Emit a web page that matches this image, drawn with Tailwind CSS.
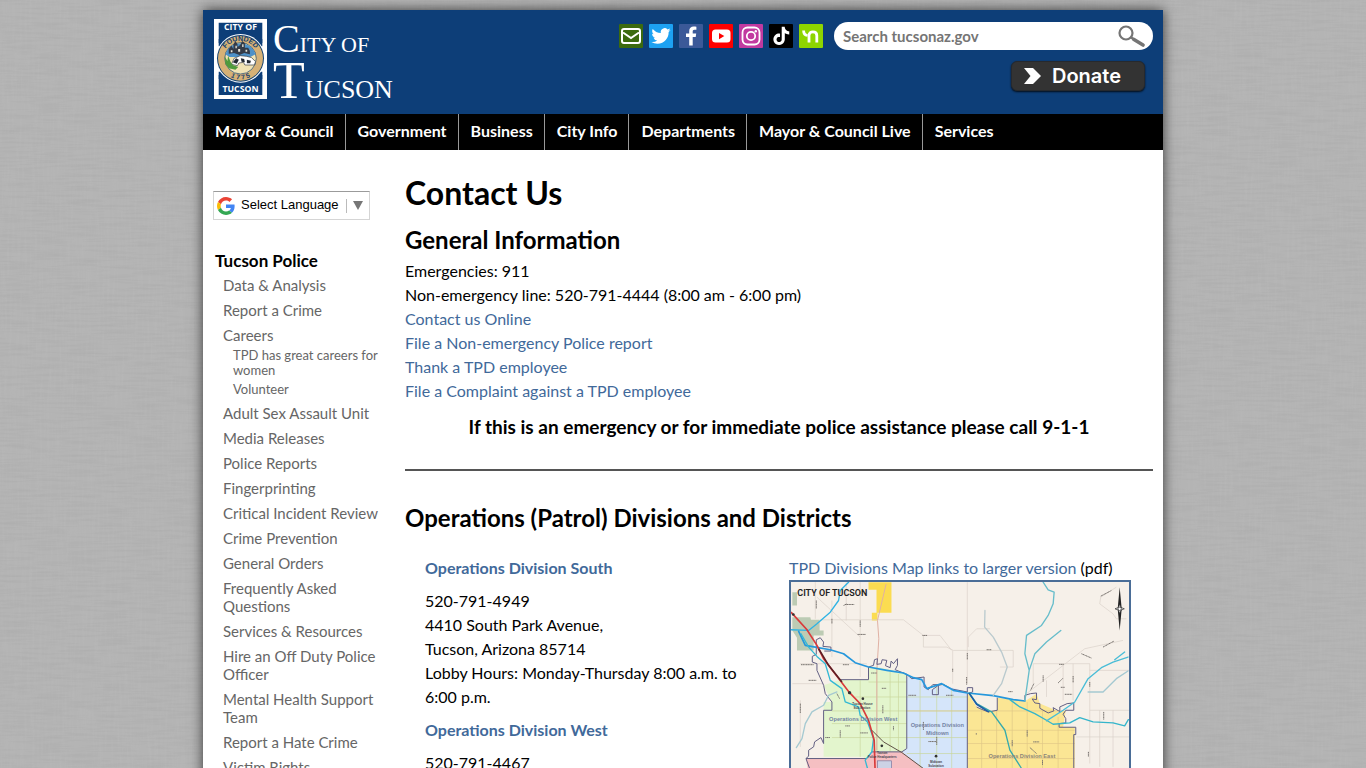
<!DOCTYPE html>
<html lang="en">
<head>
  <meta charset="UTF-8" />
  <meta name="viewport" content="width=device-width, initial-scale=1" />
  <title>Contact Us | City of Tucson</title>
  <script src="https://cdn.jsdelivr.net/npm/@tailwindcss/browser@4"></script>
</head>
<body class="relative min-h-screen bg-[#b4b4b4] pt-[10px] font-[Lato,sans-serif] text-base leading-6 text-black">
  <!-- linen background -->
  <svg class="absolute inset-0 h-full w-full" aria-hidden="true">
    <filter id="weft" x="0" y="0" width="100%" height="100%">
      <feTurbulence type="fractalNoise" baseFrequency="0.03 0.4" numOctaves="2" seed="4" />
      <feColorMatrix values="0 0 0 0 0  0 0 0 0 0  0 0 0 0 0  0.5 0 0 0 -0.2" />
    </filter>
    <filter id="warp" x="0" y="0" width="100%" height="100%">
      <feTurbulence type="fractalNoise" baseFrequency="0.4 0.03" numOctaves="2" seed="9" />
      <feColorMatrix values="0 0 0 0 1  0 0 0 0 1  0 0 0 0 1  0.5 0 0 0 -0.2" />
    </filter>
    <rect width="100%" height="100%" filter="url(#weft)" opacity="0.12" />
    <rect width="100%" height="100%" filter="url(#warp)" opacity="0.14" />
  </svg>

  <div class="relative mx-auto max-w-[960px] bg-white shadow-[0_0_12px_rgba(0,0,0,0.7)]">
    <header class="flex h-[104px] justify-between bg-[#0d3e78] pt-[9px] pr-[10px] pl-[11px]">
      <a href="#" class="flex items-start gap-[6px] text-white">
        <svg class="h-[80px] w-[53px]" viewBox="0 0 158 240" preserveAspectRatio="none" role="img" aria-label="City of Tucson seal">
          <rect width="158" height="240" fill="#fff" />
          <path d="M14 11H144V72L14 72ZM14 168H144V228H14Z" fill="#0d3e78" />
          <path d="M14 60H144V82H14ZM14 158H144V180H14Z" fill="#0d3e78" />
          <text x="79" y="34" text-anchor="middle" font-family="Open Sans" font-weight="bold" font-size="26" fill="#fff">CITY OF</text>
          <circle cx="79" cy="118" r="73" fill="#fff" />
          <circle cx="79" cy="118" r="70" fill="#12406f" />
          <circle cx="79" cy="118" r="67" fill="#d6b176" />
          <circle cx="79" cy="118" r="47" fill="#f1e3b4" stroke="#12406f" stroke-width="2" />
          <path d="M34 106A47 47 0 0 1 124 106L108 114H46Z" fill="#4e91c8" />
          <path id="ringTop" d="M26 118A53 53 0 0 1 132 118" fill="none" />
          <path id="ringBottom" d="M16 118A63 63 0 0 0 142 118" fill="none" />
          <text font-family="Liberation Sans" font-weight="bold" font-size="21" fill="#12406f" text-anchor="middle"><textPath href="#ringTop" startOffset="50%">FOUNDED</textPath></text>
          <text font-family="Liberation Sans" font-weight="bold" font-size="20" fill="#12406f" text-anchor="middle"><textPath href="#ringBottom" startOffset="50%">1 7 7 5</textPath></text>
          <path d="M44 104V90L52 80L58 90V76L64 66L70 76V84L78 78L84 66L92 72V86H102L107 96V106L90 102L76 108L60 102Z" fill="#343b48" />
          <path d="M50 94h5v6h-5zM64 80h4v8h-4zM84 76h4v8h-4zM72 90h6v8h-6zM94 92h5v6h-5z" fill="#e9e5d8" />
          <path d="M52 136L60 118L78 110L98 112L112 116L124 128L120 138H92L88 130L74 132L70 140Z" fill="#fff" stroke="#30343b" stroke-width="2" />
          <path d="M56 130l10-12 8 4-6 12zM80 118l10 2 2 10-10-2zM98 122l12 3-2 8h-10z" fill="#222831" />
          <path d="M32 112l8 14 2-16 8 20 6 8 16 6-8 8-20-4-10-14z" fill="#4f9a3c" />
          <text x="79" y="219" text-anchor="middle" font-family="Open Sans" font-weight="bold" font-size="26" fill="#fff">TUCSON</text>
        </svg>
        <span class="flex flex-col font-['Liberation_Serif',serif]">
          <span class="text-[22px] leading-10"><span class="text-[40px]">C</span>ITY OF</span>
          <span class="text-[26px] leading-8"><span class="text-[52px]">T</span>UCSON</span>
        </span>
      </a>

      <div class="flex flex-col items-end gap-[11px] pt-[3px]">
        <div class="flex items-center gap-[11px]">
          <nav class="flex gap-[6px]" aria-label="Social media">
            <a href="#" aria-label="Email">
              <svg class="size-6" viewBox="0 0 24 24"><rect width="24" height="24" rx="1" fill="#3c6a0f" /><rect x="3" y="5" width="18" height="14" rx="2" fill="none" stroke="#fff" stroke-width="2" /><path d="M4 8.500L12 14L20 8.500" fill="none" stroke="#fff" stroke-width="2" /></svg>
            </a>
            <a href="#" aria-label="Twitter">
              <svg class="size-6" viewBox="0 0 24 24"><rect width="24" height="24" rx="1" fill="#1da1f2" /><path transform="translate(2.400 2.400) scale(.8)" fill="#fff" d="M23.950 4.570a10 10 0 0 1-2.820.770 4.960 4.960 0 0 0 2.160-2.720c-.950.550-2 .950-3.130 1.180a4.920 4.920 0 0 0-8.380 4.480C7.690 8.090 4.070 6.130 1.640 3.160a4.820 4.820 0 0 0-.670 2.480c0 1.710.870 3.210 2.190 4.100a4.900 4.900 0 0 1-2.230-.620v.060a4.920 4.920 0 0 0 3.950 4.830 5 5 0 0 1-2.210.080 4.940 4.940 0 0 0 4.600 3.420A9.870 9.870 0 0 1 0 19.540a13.990 13.990 0 0 0 7.550 2.210c9.050 0 14-7.500 14-13.980 0-.210 0-.420-.020-.630a9.940 9.940 0 0 0 2.460-2.550z" /></svg>
            </a>
            <a href="#" aria-label="Facebook">
              <svg class="size-6" viewBox="0 0 24 24"><rect width="24" height="24" rx="1" fill="#3b5998" /><path d="M10.200 21.500V13H7V9.600h3.200V7c0-3 1.800-4.500 4.500-4.500 1.300 0 2.300.1 2.700.2v3.100h-1.900c-1.400 0-1.800.7-1.800 1.800v2h3.500L16.700 13h-3v8.500Z" fill="#fff" /></svg>
            </a>
            <a href="#" aria-label="YouTube">
              <svg class="size-6" viewBox="0 0 24 24"><rect width="24" height="24" rx="1" fill="#f00" /><rect x="3" y="5.500" width="18.500" height="13" rx="3.500" fill="#fff" /><path d="M10 9V15.200L15.300 12Z" fill="#f00" /></svg>
            </a>
            <a href="#" aria-label="Instagram">
              <svg class="size-6" viewBox="0 0 24 24"><rect width="24" height="24" rx="1" fill="#c13aa0" /><rect x="3.500" y="3.500" width="17" height="17" rx="5" fill="none" stroke="#fff" stroke-width="1.800" /><circle cx="12" cy="12" r="4.200" fill="none" stroke="#fff" stroke-width="1.800" /><circle cx="16.800" cy="7.300" r="1.200" fill="#fff" /></svg>
            </a>
            <a href="#" aria-label="TikTok">
              <svg class="size-6" viewBox="0 0 24 24"><rect width="24" height="24" rx="1" fill="#000" /><path transform="translate(3.200 2.800) scale(.76)" fill="#fff" d="M12.530.020c1.310-.020 2.610-.010 3.910-.020.080 1.530.630 3.090 1.750 4.170 1.120 1.110 2.700 1.620 4.240 1.790v4.030c-1.440-.050-2.890-.350-4.200-.970-.570-.260-1.100-.590-1.620-.930-.010 2.920.010 5.840-.020 8.750-.080 1.400-.540 2.790-1.350 3.940-1.310 1.920-3.580 3.170-5.910 3.210-1.430.080-2.860-.310-4.080-1.030-2.020-1.190-3.440-3.370-3.650-5.710-.020-.5-.030-1-.010-1.490.180-1.900 1.120-3.720 2.580-4.960 1.660-1.440 3.980-2.130 6.150-1.720.020 1.480-.040 2.960-.040 4.440-.990-.320-2.150-.230-3.020.370-.630.410-1.110 1.040-1.360 1.750-.210.510-.150 1.070-.140 1.610.240 1.640 1.820 3.020 3.500 2.870 1.120-.010 2.190-.660 2.770-1.610.190-.330.400-.670.410-1.060.1-1.790.060-3.570.070-5.360.010-4.030-.010-8.050.020-12.070z" /></svg>
            </a>
            <a href="#" aria-label="Nextdoor">
              <svg class="size-6" viewBox="0 0 24 24"><rect width="24" height="24" rx="1" fill="#8ed500" /><path d="M4.600 6.500c0 3.200 1.200 4.600 3.800 4.900M10 18.500V11.500c0-2.400 1.600-3.700 3.900-3.700s3.900 1.300 3.900 3.700v7" fill="none" stroke="#fff" stroke-width="2.800" /></svg>
            </a>
          </nav>
          <form class="flex h-7 w-[319px] items-center rounded-full bg-white pr-2 pl-[9px]">
            <input type="search" aria-label="Search" placeholder="Search tucsonaz.gov" class="min-w-0 flex-1 text-[15px] font-bold text-[#757575] outline-none placeholder:text-[#757575]" />
            <button type="button" aria-label="Search">
              <svg class="h-[22px] w-[27px]" viewBox="0 0 27 22"><circle cx="8" cy="8" r="6.500" fill="none" stroke="#757575" stroke-width="2.200" /><path d="M12.500 12L16 14.500" stroke="#757575" stroke-width="2.500" /><path d="M16 14.500L25 20" stroke="#757575" stroke-width="3.600" stroke-linecap="round" /></svg>
            </button>
          </form>
        </div>
        <button type="button" class="mr-2 flex h-[30px] w-[134px] items-center gap-[11px] rounded-md border border-[#26292e] bg-[#333] pl-3 font-[Inter,sans-serif] text-xl font-semibold text-white shadow-[0_1px_2px_rgba(0,0,0,0.8)]">
          <svg class="h-4 w-[17px]" viewBox="0 0 17 16"><path d="M0 0H9L17 8L9 16H0L6.500 8Z" fill="#fff" /></svg>
          Donate
        </button>
      </div>
    </header>

    <nav class="flex h-9 bg-black font-bold leading-[34px] text-white">
      <a href="#" class="border-r border-[#999] pr-[11px] pl-3">Mayor &amp; Council</a>
      <a href="#" class="border-r border-[#999] pr-[11px] pl-3">Government</a>
      <a href="#" class="border-r border-[#999] pr-[11px] pl-3">Business</a>
      <a href="#" class="border-r border-[#999] pr-[11px] pl-3">City Info</a>
      <a href="#" class="border-r border-[#999] pr-[11px] pl-3">Departments</a>
      <a href="#" class="border-r border-[#999] pr-[11px] pl-3">Mayor &amp; Council Live</a>
      <a href="#" class="pr-[11px] pl-3">Services</a>
    </nav>

    <div class="flex px-[10px]">
      <aside class="w-48 shrink-0 pt-[41px]">
        <label class="flex h-[29px] w-[157px] items-center border border-[#d5d5d5] border-t-[#9b9b9b] pl-[3px]">
          <svg class="mr-[2px] size-[18px]" viewBox="0 0 48 48" aria-hidden="true">
            <path fill="#ea4335" d="M24 9.500c3.540 0 6.710 1.220 9.210 3.600l6.850-6.850C35.900 2.380 30.470 0 24 0 14.620 0 6.510 5.380 2.560 13.220l7.980 6.190C12.430 13.720 17.740 9.500 24 9.500z" />
            <path fill="#4285f4" d="M46.980 24.550c0-1.570-.150-3.090-.380-4.550H24v9.020h12.940c-.580 2.960-2.260 5.480-4.780 7.180l7.730 6c4.510-4.180 7.090-10.360 7.090-17.650z" />
            <path fill="#fbbc05" d="M10.530 28.590c-.480-1.450-.760-2.990-.760-4.590s.270-3.140.760-4.590l-7.980-6.190C.920 16.460 0 20.120 0 24c0 3.880.920 7.540 2.560 10.780l7.970-6.190z" />
            <path fill="#34a853" d="M24 48c6.480 0 11.930-2.130 15.890-5.810l-7.730-6c-2.150 1.450-4.920 2.300-8.160 2.300-6.260 0-11.570-4.220-13.470-9.910l-7.980 6.190C6.510 42.620 14.620 48 24 48z" />
          </svg>
          <select aria-label="Select Language" class="w-[109px] appearance-none px-1 pb-[2px] font-['Liberation_Sans',sans-serif] text-[13px] leading-5">
            <option>Select Language</option>
          </select>
          <span class="h-[14px] border-l border-[#bbb]"></span>
          <svg class="ml-[6px] h-[9px] w-[10px]" viewBox="0 0 10 9"><path d="M0 0H10L5 9Z" fill="#767676" /></svg>
        </label>

        <h2 class="mt-[29px] ml-[2px] text-[17px] leading-6 font-bold">Tucson Police</h2>
        <ul class="mt-[3px] ml-[10px] flex w-[168px] flex-col gap-[7px] text-[15px] leading-[18px] text-[#666]">
          <li><a href="#">Data &amp; Analysis</a></li>
          <li><a href="#">Report a Crime</a></li>
          <li>
            <a href="#">Careers</a>
            <ul class="mt-1 ml-[10px] flex flex-col gap-1 text-[13px] leading-[15px]">
              <li><a href="#">TPD has great careers for women</a></li>
              <li><a href="#">Volunteer</a></li>
            </ul>
          </li>
          <li><a href="#">Adult Sex Assault Unit</a></li>
          <li><a href="#">Media Releases</a></li>
          <li><a href="#">Police Reports</a></li>
          <li><a href="#">Fingerprinting</a></li>
          <li><a href="#">Critical Incident Review</a></li>
          <li><a href="#">Crime Prevention</a></li>
          <li><a href="#">General Orders</a></li>
          <li><a href="#">Frequently Asked Questions</a></li>
          <li><a href="#">Services &amp; Resources</a></li>
          <li><a href="#">Hire an Off Duty Police Officer</a></li>
          <li><a href="#">Mental Health Support Team</a></li>
          <li><a href="#">Report a Hate Crime</a></li>
          <li><a href="#">Victim Rights</a></li>
        </ul>
      </aside>

      <main class="min-w-0 flex-1 pt-[23px]">
        <h1 class="text-[32px] leading-10 font-bold">Contact Us</h1>
        <h2 class="mt-[15px] text-2xl leading-6 font-bold">General Information</h2>
        <p class="mt-[7px]">
          Emergencies: 911<br />
          Non-emergency line: 520-791-4444 (8:00 am - 6:00 pm)<br />
          <a href="#" class="text-[#41699a]">Contact us Online</a><br />
          <a href="#" class="text-[#41699a]">File a Non-emergency Police report</a><br />
          <a href="#" class="text-[#41699a]">Thank a TPD employee</a><br />
          <a href="#" class="text-[#41699a]">File a Complaint against a TPD employee</a>
        </p>
        <p class="mt-3 text-center text-[19px] leading-6 font-bold">If this is an emergency or for immediate police assistance please call 9-1-1</p>
        <hr class="mt-[30px] border-t-2 border-[#555]" />
        <h2 class="mt-[35px] text-2xl leading-6 font-bold">Operations (Patrol) Divisions and Districts</h2>

        <div class="mt-[26px] grid grid-cols-[364px_1fr]">
          <div class="flex flex-col gap-[9px] pr-5 pl-5">
            <h3 class="font-bold text-[#41699a]"><a href="#">Operations Division South</a></h3>
            <p>520-791-4949<br />4410 South Park Avenue,<br />Tucson, Arizona 85714<br />Lobby Hours: Monday-Thursday 8:00 a.m. to 6:00 p.m.</p>
            <h3 class="font-bold text-[#41699a]"><a href="#">Operations Division West</a></h3>
            <p>520-791-4467</p>
          </div>
          <div class="pl-5">
            <p><a href="#" class="text-[#41699a]">TPD Divisions Map links to larger version</a> (pdf)</p>
            <a href="#" class="block w-[342px] border-2 border-[#4a6d97]">
              <svg class="block h-[200px] w-full" viewBox="32 95 1016 600" role="img" aria-label="Map of Tucson police divisions">
                <rect x="28" y="90" width="1030" height="610" fill="#f6f0e9" />
                <path d="M36 200H90L92 208H118V240H130V255H100V300H50V262L36 240ZM36 125H50V165H36Z" fill="#bccbb4" />
                <path d="M265 95H334V187H292V210H275V187H289V118H265Z" fill="#fbdc51" />
                <!-- minor roads -->
                <g fill="none" stroke="#d9d0c8" stroke-width="2">
                  <path d="M105 95V205M155 150V320M240 95V380M198 95V210M60 340H260M36 400H130M60 450V590M120 208H370L430 255V290H500L520 300H700M700 300V350H660M518 300V400M562 95V400M565 290V260L590 235H630M110 140L240 260M430 255H480L515 300" />
                  <path d="M760 340H930V640M760 340V400M930 360H1050M800 390V440M850 340V450M880 340V450M740 430L915 295L1030 270M930 480H1050M890 560H1050M960 480V650M1000 480V650M963 140L1010 110M963 140L960 160L1000 190L1010 205H1040" />
                </g>
                <!-- divisions -->
                <path d="M180 388H265V350H290L340 360L380 372V600L365 607L410 655H260L250 620H130V455H155L130 405Z" fill="#e3f5cd" />
                <path d="M380 380L432 385L445 420L490 405L562 425V700H430L365 607L380 595Z" fill="#d5e5fa" />
                <path d="M562 425L590 470L625 485L652 480V442L735 453L770 430L780 460L840 485L858 480L850 530H885V700H562Z" fill="#fbe694" />
                <path d="M77 625H260L275 605H365L430 655V700H90Z" fill="#f5bfc2" />
                <g fill="none" stroke="#c9d69b" stroke-width="2">
                  <path d="M240 390V620M290 355V605M330 365V605M355 370V600M265 395H380M225 440H380M155 482H562M155 520H380M155 562H380M420 390V700M470 410V700M515 415V700M380 440H562M380 562H562M380 610H562" />
                </g>
                <g fill="none" stroke="#dfc786" stroke-width="2">
                  <path d="M605 480V700M650 480V700M697 450V700M742 455V700M788 480V700M835 500V700M562 482H850M562 540H885M562 580H885M562 625H885M380 482H562" />
                </g>
                <path d="M318 100L292 210L296 265L290 360V600" fill="none" stroke="#e0b1a4" stroke-width="3" />
                <!-- boundaries -->
                <g fill="none" stroke="#625f83" stroke-width="3" stroke-linejoin="round">
                  <path d="M77 625H260L275 605H365L380 595V372" />
                  <path d="M108 285V268L120 262L130 275L128 288L152 290V302H132M108 285V312L96 318V335L110 340V360L130 405L135 430L155 455V480H130V580L122 562L103 575L100 590L85 600V618L77 625L88 655" />
                  <path d="M180 388H265V350L280 345L283 328L292 325L290 342L303 340L306 328L320 330L316 346L330 352L333 332L340 340L352 325V345L345 358L380 372L395 385L432 380V410L445 418L458 403H475V433H457V418L475 405L490 402L515 416L562 425V412H578V425L562 430V700M652 480V442M590 470L600 475L625 485L652 480M735 453V435L752 430L770 428V448L757 446L765 458L780 460V474L805 488L822 482L820 472L840 484V470L862 460L882 458V480H858L850 492L858 505V518L838 520V531H888V553H882V700" />
                </g>
                <!-- washes and rivers -->
                <g fill="none" stroke-linecap="round" stroke-linejoin="round">
                  <path d="M205 95L180 120L175 150L150 185L110 220L85 240L32 238" stroke="#2fb3e4" stroke-width="4" />
                  <path d="M55 243L75 285L105 290L150 298L190 310L225 337L265 350L320 360L370 368L400 382L425 388L440 415L485 400L520 420L562 428L640 436L700 448L735 452" stroke="#2597dc" stroke-width="5" />
                  <path d="M62 250L85 290L110 318L135 340L150 390L185 415L195 455L235 470L240 495L262 515L280 565L275 605L255 630L262 655" stroke="#33b9d4" stroke-width="4" />
                  <path d="M790 95L805 118L823 125L820 160L805 195L785 225L740 255L735 310L748 360L735 452M843 240L800 275L765 310L748 360" stroke="#67bdcb" stroke-width="4" />
                  <path d="M615 180L614 230L640 260L665 305L682 350L665 400L640 435" stroke="#bacace" stroke-width="4" />
                  <path d="M568 428L590 460L635 485L675 540L690 600L725 655" stroke="#35aaad" stroke-width="4" />
                  <path d="M690 448L720 470L765 490L800 510L820 522L870 518L900 502L940 515L1000 518L1035 527L1046 508" stroke="#34b5cb" stroke-width="4" />
                  <path d="M800 512L850 480L885 455L925 385L965 352L1000 335L1045 320M1005 328L1035 305" stroke="#49bdd7" stroke-width="4" />
                  <path d="M568 430L590 462L625 484" stroke="#1d5da5" stroke-width="5" />
                  <path d="M170 425L145 435L130 465L95 485L75 520L65 565L48 592M925 425L970 425L1010 385L1045 362" stroke="#a5c9d1" stroke-width="4" />
                </g>
                <!-- freeway -->
                <path d="M32 185L80 238L110 285L130 325L208 427L240 460L265 510L282 570L286 700" fill="none" stroke="#d93b3b" stroke-width="5" />
                <path d="M115 295L145 345L185 395" fill="none" stroke="#5c2026" stroke-width="5" />
                <path d="M275 540L310 575L365 607L430 655" fill="none" stroke="#5e5145" stroke-width="3" />
                <rect x="292" y="632" width="42" height="40" fill="#ccd2e5" stroke="#77749b" stroke-width="2" />
                <!-- street labels, too small to read -->
                <g stroke="#76716d" stroke-width="3" stroke-dasharray="4 1">
                  <path d="M108 150V175M155 205V220M240 210V230M195 162H222M232 252H256M427 255H441M562 308V328M518 355V365M620 298H634M62 343H100M188 343H206M60 460V488M85 390H108M273 368H290M385 435H408M498 435H520M685 424H698M560 380V403M838 342H852M790 375V395M880 377V397M930 395V410M843 411H855M855 432H877M972 485V508M926 605V620M963 137L995 120M970 290L1003 272M905 310L935 323M835 398L850 383M762 400L752 420M308 465V490M180 540V562M340 528V540M305 414H318M195 527H210M135 562H150M240 548H263M445 574H470M430 515V540M589 549V553M697 570V588M742 540V560M760 575H778M788 630V645M750 592L770 610M190 165L200 160M470 560V585M170 430L178 445" />
                </g>
                <circle cx="39" cy="192" r="4" fill="#333" />
                <circle cx="208" cy="427" r="5" fill="#333" />
                <circle cx="248" cy="445" r="4" fill="#333" />
                <circle cx="305" cy="587" r="4" fill="#333" />
                <circle cx="468" cy="618" r="4" fill="#333" />
                <g font-family="Liberation Sans" font-weight="bold" text-anchor="middle">
                  <g font-size="9" fill="#443f4c">
                    <text x="247" y="465">Tucson House</text>
                    <text x="245" y="475">Sub-Station</text>
                    <text x="306" y="612">Tucson</text>
                    <text x="306" y="624">Police Headquarters</text>
                    <text x="468" y="640">Midtown</text>
                    <text x="468" y="650">Substation</text>
                  </g>
                  <g font-size="17" fill="#7483a3">
                    <text x="249" y="513">Operations Division West</text>
                    <text x="472" y="531">Operations Division</text>
                    <text x="472" y="555">Midtown</text>
                    <text x="726" y="623" fill="#8d8478">Operations Division East</text>
                  </g>
                </g>
                <text x="51" y="137" font-family="Roboto" font-weight="600" font-size="27" fill="#222">CITY OF TUCSON</text>
                <!-- compass -->
                <path d="M1020 110L1026 175L1020 240L1014 175Z" fill="#222" />
                <path d="M1020 161L1024 171L1034 175L1024 179L1020 189L1016 179L1006 175L1016 171Z" fill="#eee" stroke="#222" stroke-width="2" />
                <circle cx="1020" cy="175" r="5" fill="#fff" stroke="#222" stroke-width="2" />
              </svg>
            </a>
          </div>
        </div>
      </main>
    </div>
  </div>
</body>
</html>
